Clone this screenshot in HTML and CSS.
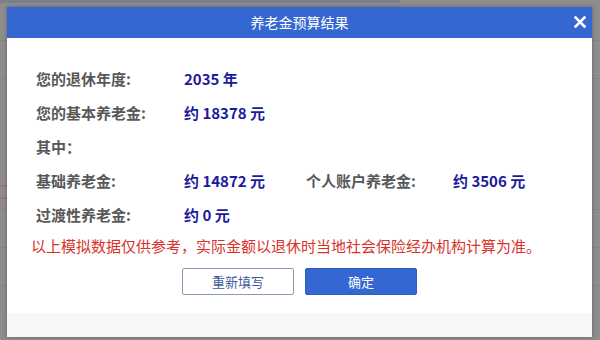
FILE: index.html
```html
<!DOCTYPE html>
<html lang="zh-CN">
<head>
  <meta charset="UTF-8">
  <title>养老金预算结果</title>
  <link rel="stylesheet" href="styles.css">
</head>
<body>

  <!-- Page behind the mask -->
  <div class="page">
    <div class="page-top"></div>
    <div class="page-row"></div>
    <div class="page-row"></div>
    <div class="page-row page-mark"><span class="page-link"></span></div>
    <div class="page-row"></div>
    <div class="page-row"></div>
  </div>

  <!-- Result dialog -->
  <div class="dialog">
    <div class="dialog-head">
      <span class="dialog-title">养老金预算结果</span>
      <svg class="dialog-close" width="12" height="12" viewBox="0 0 12 12">
        <path d="M1.5 1.5 L10.5 10.5 M10.5 1.5 L1.5 10.5" stroke="#ffffff" stroke-width="2.6" stroke-linecap="square"/>
      </svg>
    </div>

    <div class="dialog-body">
      <div class="result">
        <div class="row">
          <span class="label">您的退休年度:</span>
          <span class="value">2035 年</span>
        </div>
        <div class="row">
          <span class="label">您的基本养老金:</span>
          <span class="value">约 18378 元</span>
        </div>
        <div class="row">
          <span class="label">其中：</span>
        </div>
        <div class="row">
          <span class="label">基础养老金:</span>
          <span class="value value-short">约 14872 元</span>
          <span class="label">个人账户养老金:</span>
          <span class="value">约 3506 元</span>
        </div>
        <div class="row">
          <span class="label">过渡性养老金:</span>
          <span class="value">约 0 元</span>
        </div>
      </div>

      <p class="notice">以上模拟数据仅供参考，实际金额以退休时当地社会保险经办机构计算为准。</p>

      <div class="actions">
        <button class="btn btn-plain">重新填写</button>
        <button class="btn btn-primary">确定</button>
      </div>
    </div>

    <div class="dialog-foot"></div>
  </div>

</body>
</html>
```

FILE: styles.css
```css
/* Basic styling */
body {
  margin: 0;
  padding: 0;
  font-family: "Noto Sans CJK SC", "Liberation Sans", sans-serif;
  background-color: #8d8d8d;
  overflow: hidden;
}

/* Faded page under the mask */
.page {
  height: 340px;
  overflow: hidden;
}

.page-top {
  width: 400px;
  height: 3px;
  background-color: #7c8088;
}

.page-row {
  height: 37px;
  border-bottom: 1px solid #848484;
}

.page-mark {
  height: 130px;
  display: flex;
  align-items: flex-end;
}

.page-link {
  display: block;
  width: 7px;
  height: 10px;
  margin-bottom: 10px;
  border-top: 2px solid #a8705e;
  border-bottom: 2px solid #a8705e;
}

/* Dialog */
.dialog {
  position: absolute;
  left: 7px;
  top: 7px;
  width: 585px;
  height: 330px;
  background-color: #ffffff;
  box-shadow: 0 0 4px rgba(0, 0, 0, 0.3);
  display: flex;
  flex-direction: column;
}

.dialog-head {
  height: 31px;
  background-color: #3467d1;
  color: #ffffff;
  display: flex;
  align-items: center;
  justify-content: center;
  position: relative;
}

.dialog-title {
  font-size: 14px;
  line-height: 31px;
  margin-top: -1px;
}

.dialog-close {
  position: absolute;
  right: 6px;
  top: 9px;
}

.dialog-body {
  flex: 1;
  padding: 23px 0 0 24px;
}

.result {
  padding-left: 5px;
}

.row {
  display: flex;
  align-items: center;
  height: 34px;
}

.label {
  width: 148px;
  font-size: 15px;
  font-weight: bold;
  color: #585858;
}

.row .label + .value + .label {
  width: 147px;
}

.value {
  font-size: 15px;
  font-weight: bold;
  color: #1b1b9d;
}

.value-short {
  width: 122px;
}

.notice {
  margin: 5px 0 0 0;
  font-size: 15px;
  line-height: 20px;
  color: #d8322b;
}

.actions {
  display: flex;
  justify-content: center;
  gap: 11px;
  margin: 12px 24px 0 0;
}

.btn {
  width: 112px;
  height: 27px;
  border-radius: 2px;
  font-family: "Noto Sans CJK SC", sans-serif;
  font-size: 13px;
  padding: 0;
}

.btn-plain {
  background-color: #ffffff;
  border: 1px solid #8a9bb8;
  color: #3c5a98;
}

.btn-primary {
  background-color: #3467d1;
  border: 1px solid #2f5ec0;
  color: #ffffff;
}

.dialog-foot {
  height: 24px;
  background-color: #f8f8f8;
}
```
